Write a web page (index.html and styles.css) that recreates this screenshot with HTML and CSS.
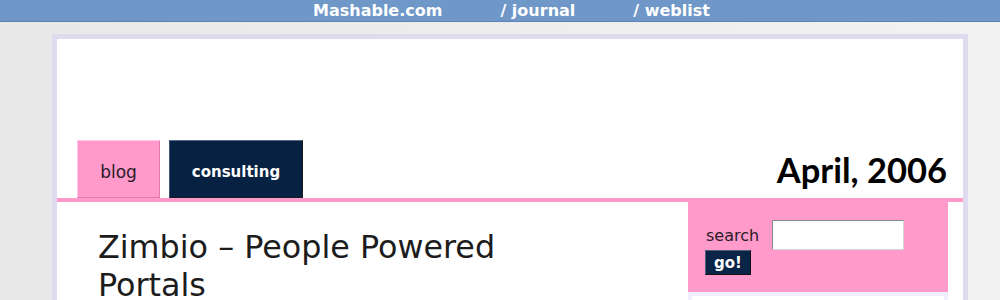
FILE: index.html
```html
<!DOCTYPE html>
<html>
<head>
<meta charset="utf-8">
<title>Mashable - April, 2006</title>
<link rel="stylesheet" href="styles.css">
</head>
<body>
<div class="topbar">
  <a class="top-link" href="#">Mashable.com</a>
  <a class="top-link" href="#">/ journal</a>
  <a class="top-link" href="#">/ weblist</a>
</div>
<div class="page">
  <div class="tabrow">
    <div class="tabs">
      <a class="tab tab-blog" href="#">blog</a>
      <a class="tab tab-consulting" href="#">consulting</a>
    </div>
    <div class="date">April, 2006</div>
  </div>
  <div class="content">
    <div class="main">
      <h1 class="headline">Zimbio – People Powered Portals</h1>
    </div>
    <div class="sidebar">
      <form class="search">
        <div class="search-row">
          <label class="search-label">search</label>
          <input class="search-input" type="text">
        </div>
        <button class="go" type="button">go!</button>
      </form>
      <div class="sidebox"><div class="sidebox-inner"></div></div>
    </div>
  </div>
</div>
</body>
</html>
```
FILE: styles.css
```css
html, body {
  margin: 0;
  padding: 0;
}
body {
  background: linear-gradient(to right, #e8e8e8, #f2f2f2);
  font-family: "DejaVu Sans", sans-serif;
  height: 300px;
  overflow: hidden;
}
.topbar {
  height: 21px;
  background: #6f97c7;
  border-bottom: 1px solid #5a82b4;
  display: flex;
  gap: 58px;
  padding-left: 313px;
}
.top-link {
  color: #fff;
  font-weight: bold;
  font-size: 16px;
  line-height: 21px;
  text-decoration: none;
}
.page {
  margin: 12px 0 0 52px;
  width: 906px;
  border: 5px solid #dddbed;
  background: #fff;
}
.tabrow {
  margin-top: 101px;
  display: flex;
  justify-content: space-between;
  align-items: flex-end;
  padding: 0 16px 0 20px;
  border-bottom: 4px solid #ff9acb;
}
.tabs {
  display: flex;
  gap: 9px;
}
.tab {
  box-sizing: border-box;
  display: block;
  height: 58px;
  padding-top: 7px;
  line-height: 48px;
  text-align: center;
  text-decoration: none;
  border: 1px solid;
}
.tab-blog {
  width: 83px;
  background: #ff9acb;
  color: #2a1a26;
  font-size: 17px;
  border-color: #ffc6f4 #e07cb2 #e07cb2 #ffc6f4;
}
.tab-consulting {
  width: 134px;
  background: #062142;
  color: #fff;
  font-weight: bold;
  font-size: 15px;
  border-color: #566a84 #1a1a1a #1a1a1a #3d5674;
}
.date {
  font-family: Lato, sans-serif;
  font-weight: bold;
  font-size: 34.5px;
  line-height: 34px;
  padding-bottom: 11px;
  color: #000;
}
.content {
  display: flex;
  align-items: flex-start;
}
.main {
  flex: 1;
  padding: 0 90px 0 41px;
}
.headline {
  margin: 26px 0 0 0;
  font-weight: normal;
  font-size: 31.8px;
  line-height: 38px;
  color: #1c1c1c;
}
.sidebar {
  width: 260px;
  margin-right: 15px;
}
.search {
  margin: 0;
  background: #ff9acb;
  padding: 18px 18px 17px 18px;
}
.search-row {
  display: flex;
  align-items: flex-end;
  gap: 13px;
}
.search-label {
  font-size: 16px;
  line-height: 20px;
  margin-bottom: 4px;
  color: #2a1a26;
}
.search-input {
  box-sizing: border-box;
  width: 132px;
  height: 30px;
  margin: 0;
  padding: 0;
  background: #fff;
  border: 1px solid;
  border-color: #8a8a8a #d6d6d6 #d6d6d6 #8a8a8a;
}
.go {
  display: block;
  box-sizing: border-box;
  width: 46px;
  height: 25px;
  margin: 0 0 0 -1px;
  padding: 0;
  background: #0a2447;
  color: #fff;
  font-family: "DejaVu Sans", sans-serif;
  font-weight: bold;
  font-size: 15px;
  line-height: 22px;
  border: 1px solid;
  border-color: #4a5e78 #111 #111 #4a5e78;
}
.sidebox {
  border: 4px solid #efeffb;
  background: #fff;
}
.sidebox-inner {
  height: 100px;
}
```
